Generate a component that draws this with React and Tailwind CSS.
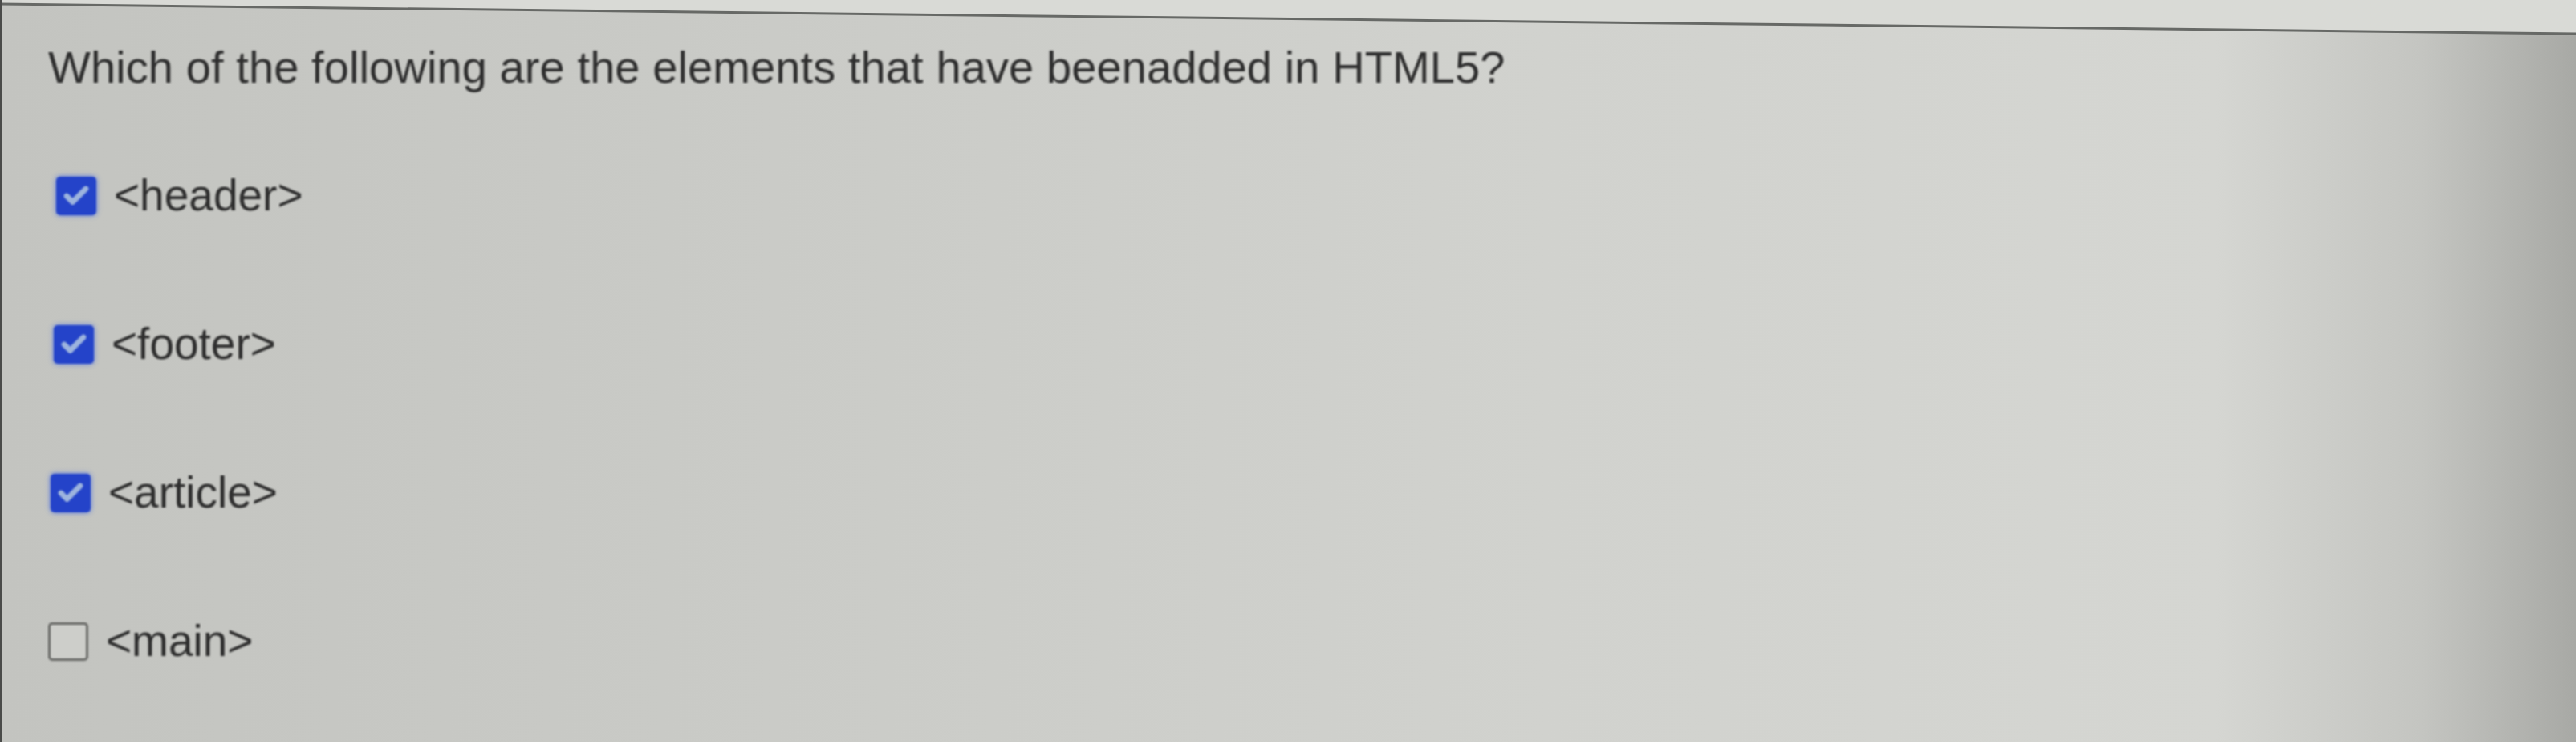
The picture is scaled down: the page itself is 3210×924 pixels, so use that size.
import { Check } from 'lucide-react';

// Options shown under the question; ml nudges follow the photo's slight skew
const options = [
  { label: '<header>', checked: true, ml: 'ml-[10px]' },
  { label: '<footer>', checked: true, ml: 'ml-[7px]' },
  { label: '<article>', checked: true, ml: 'ml-[3px]' },
  { label: '<main>', checked: false, ml: 'ml-0' },
];

function Box({ checked }) {
  if (!checked) {
    return <div className="w-[50px] h-[48px] rounded-[5px] border-[3px] border-[#6a6b68] bg-[#cdceca] shrink-0" />;
  }
  return (
    <div className="w-[50px] h-[48px] rounded-[5px] bg-[#2443c9] shadow-[0_0_6px_#4a6ee0] flex items-center justify-center shrink-0">
      <Check className="w-[36px] h-[36px] text-[#9db4de]" strokeWidth={4.5} />
    </div>
  );
}

export default function App() {
  return (
    <div
      className="relative w-full h-[924px] overflow-hidden bg-[linear-gradient(90deg,#c3c4c0_0%,#cacbc7_30%,#d1d2ce_60%,#d5d6d2_86%,#c4c5c1_94%,#a8a9a5_100%)]"
      style={{ fontFamily: '"Liberation Sans", Arial, sans-serif' }}
    >
      {/* screen edge line, tilted by the camera */}
      <svg className="absolute left-0 top-0 w-full h-[60px]" viewBox="0 0 3210 60" preserveAspectRatio="none">
        <polygon points="0,0 3210,0 3210,42 0,5" fill="#d9dad6" />
        <line x1="0" y1="5" x2="3210" y2="42" stroke="#676966" strokeWidth="3" />
      </svg>
      <div className="absolute left-0 top-0 bottom-0 w-[3px] bg-[#4a4b49]" />

      <div className="relative pl-[60px] pt-[56px] text-[#2e2e2e] blur-[0.9px]">
        <p className="text-[56px] leading-none tracking-[0.1px] whitespace-nowrap">
          Which of the following are the elements that have beenadded in HTML5?
        </p>
        <div className="mt-[104px] flex flex-col gap-[130px]">
          {options.map((o) => (
            <div key={o.label} className={`flex items-center gap-[22px] ${o.ml}`}>
              <Box checked={o.checked} />
              <span className="text-[55px] leading-none whitespace-nowrap">{o.label}</span>
            </div>
          ))}
        </div>
      </div>
    </div>
  );
}
